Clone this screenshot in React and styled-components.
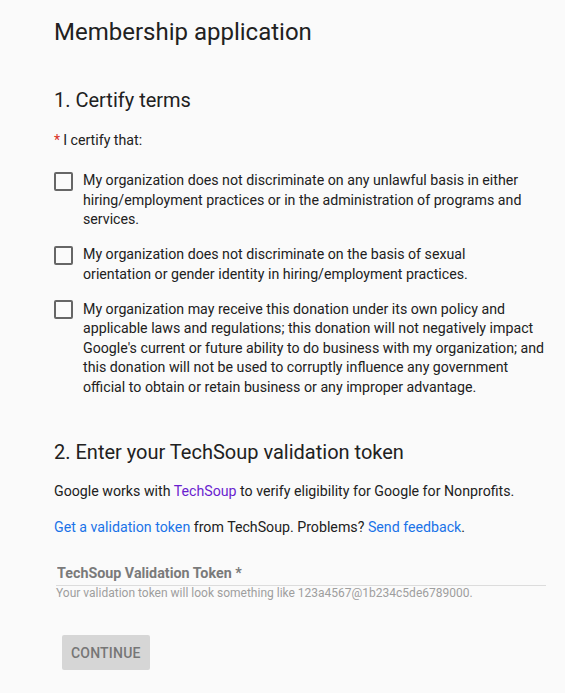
import React, { useState } from "react";
import styled, { createGlobalStyle } from "styled-components";

const GlobalStyle = createGlobalStyle`
  html, body {
    margin: 0;
    padding: 0;
    background: #fafafa;
  }
  body {
    font-family: Roboto, "Liberation Sans", Arial, sans-serif;
    color: #212121;
  }
`;

const Page = styled.div`
  min-height: 693px;
  box-sizing: border-box;
  padding: 16px 20px 20px 54px;
  background: #fafafa;
`;

const Title = styled.h1`
  margin: 0;
  font-size: 24px;
  font-weight: 400;
  line-height: 32px;
  color: #212121;
`;

const SectionTitle = styled.h2`
  margin: ${(p) => p.$top}px 0 0;
  font-size: 20px;
  font-weight: 400;
  line-height: 28px;
  color: #212121;
`;

const Text = styled.p`
  margin: ${(p) => p.$top || 0}px 0 0;
  font-size: 14.2px;
  line-height: 20px;
  color: #212121;
`;

const Required = styled.span`
  color: #d93025;
  margin-right: 3px;
`;

const TermList = styled.div`
  display: flex;
  flex-direction: column;
  gap: 15.5px;
  margin-top: 21px;
`;

const Term = styled.label`
  display: flex;
  align-items: flex-start;
  gap: 10px;
  cursor: pointer;
`;

const Box = styled.span`
  flex: none;
  box-sizing: border-box;
  width: 19px;
  height: 19px;
  margin-top: 0.5px;
  border: 2px solid #666;
  border-radius: 2px;
  background: ${(p) => (p.$checked ? "#666" : "transparent")};
`;

const TermText = styled.span`
  font-size: 14.2px;
  line-height: 19.5px;
  color: #212121;
  max-width: ${(p) => p.$width || 462}px;
`;

const Link = styled.a`
  color: ${(p) => (p.$visited ? "#6a1ecf" : "#1a73e8")};
  text-decoration: none;
`;

const Field = styled.div`
  margin-top: 27px;
  padding-left: 2px;
`;

const Input = styled.input`
  display: block;
  width: 100%;
  box-sizing: content-box;
  border: none;
  border-bottom: 1px solid #dcdcdc;
  background: transparent;
  padding: 0 0 3px 1px;
  height: 18px;
  font-family: inherit;
  font-size: 14.3px;
  font-weight: 700;
  line-height: 18px;
  color: #212121;
  outline: none;
  &::placeholder {
    color: #7a7a7a;
  }
`;

const Helper = styled.div`
  font-size: 12px;
  line-height: 14px;
  color: #9e9e9e;
`;

const Button = styled.button`
  margin: 35px 0 0 8px;
  height: 35px;
  padding: 0 9px;
  border: none;
  border-radius: 2px;
  background: #d6d6d6;
  color: #767676;
  font-family: inherit;
  font-size: 14px;
  font-weight: 500;
  letter-spacing: 0.2px;
  text-transform: uppercase;
`;

const terms = [
  {
    text: "My organization does not discriminate on any unlawful basis in either hiring/employment practices or in the administration of programs and services.",
  },
  {
    text: "My organization does not discriminate on the basis of sexual orientation or gender identity in hiring/employment practices.",
    width: 440,
  },
  {
    text: "My organization may receive this donation under its own policy and applicable laws and regulations; this donation will not negatively impact Google's current or future ability to do business with my organization; and this donation will not be used to corruptly influence any government official to obtain or retain business or any improper advantage.",
  },
];

export default function App() {
  const [checked, setChecked] = useState([false, false, false]);
  const [token, setToken] = useState("");

  const toggle = (i) =>
    setChecked((c) => c.map((v, j) => (j === i ? !v : v)));

  return (
    <>
      <GlobalStyle />
      <Page>
        <Title>Membership application</Title>

        <SectionTitle $top={38}>1. Certify terms</SectionTitle>
        <Text $top={16}>
          <Required>*</Required>I certify that:
        </Text>

        <TermList>
          {terms.map((t, i) => (
            <Term key={i} onClick={() => toggle(i)}>
              <Box $checked={checked[i]} />
              <TermText $width={t.width}>{t.text}</TermText>
            </Term>
          ))}
        </TermList>

        <SectionTitle $top={41}>2. Enter your TechSoup validation token</SectionTitle>
        <Text $top={15}>
          Google works with <Link $visited href="#">TechSoup</Link> to verify
          eligibility for Google for Nonprofits.
        </Text>
        <Text $top={16}>
          <Link href="#">Get a validation token</Link> from TechSoup. Problems?{" "}
          <Link href="#">Send feedback</Link>.
        </Text>

        <Field>
          <Input
            placeholder="TechSoup Validation Token *"
            value={token}
            onChange={(e) => setToken(e.target.value)}
          />
          <Helper>
            Your validation token will look something like
            123a4567@1b234c5de6789000.
          </Helper>
        </Field>

        <Button disabled>Continue</Button>
      </Page>
    </>
  );
}
